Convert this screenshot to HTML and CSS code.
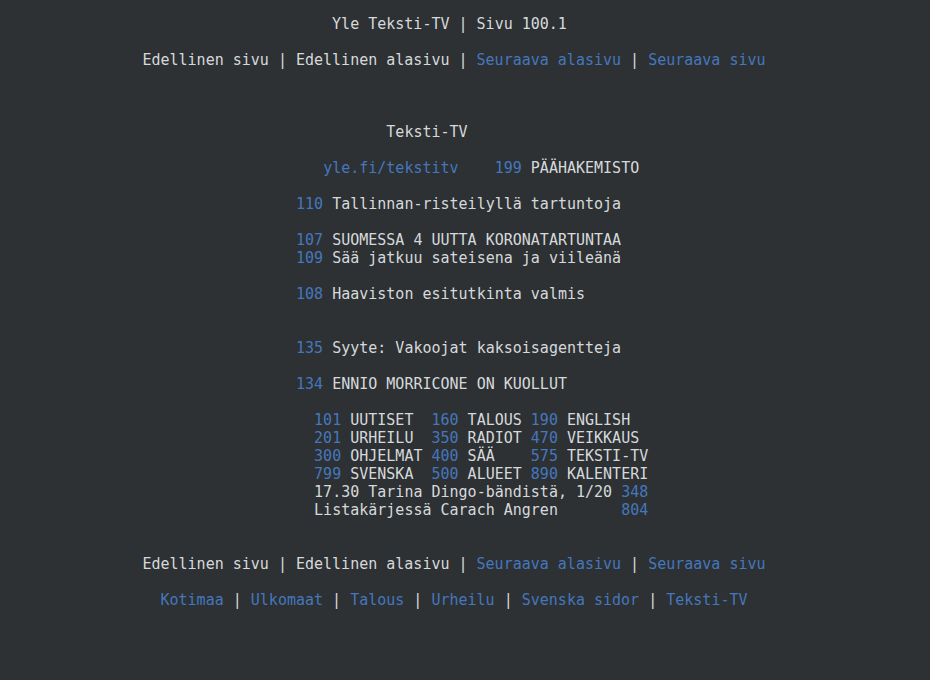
FILE: index.html
```html
<!DOCTYPE html>
<html lang="fi">
<head>
<meta charset="utf-8">
<title>Yle Teksti-TV | Sivu 100.1</title>
<link rel="stylesheet" href="styles.css">
</head>
<body>
<div class="page">
<h1 class="title">Yle Teksti-TV | Sivu 100.1 </h1>
<nav class="nav nav-top">Edellinen sivu | Edellinen alasivu | <a href="#">Seuraava alasivu</a> | <a href="#">Seuraava sivu</a></nav>
<pre class="tt">           Teksti-TV

    <a href="#">yle.fi/tekstitv</a>    <a href="#">199</a> PÄÄHAKEMISTO

 <a href="#">110</a> Tallinnan-risteilyllä tartuntoja

 <a href="#">107</a> SUOMESSA 4 UUTTA KORONATARTUNTAA
 <a href="#">109</a> Sää jatkuu sateisena ja viileänä

 <a href="#">108</a> Haaviston esitutkinta valmis


 <a href="#">135</a> Syyte: Vakoojat kaksoisagentteja

 <a href="#">134</a> ENNIO MORRICONE ON KUOLLUT

   <a href="#">101</a> UUTISET  <a href="#">160</a> TALOUS <a href="#">190</a> ENGLISH
   <a href="#">201</a> URHEILU  <a href="#">350</a> RADIOT <a href="#">470</a> VEIKKAUS
   <a href="#">300</a> OHJELMAT <a href="#">400</a> SÄÄ    <a href="#">575</a> TEKSTI-TV
   <a href="#">799</a> SVENSKA  <a href="#">500</a> ALUEET <a href="#">890</a> KALENTERI
   17.30 Tarina Dingo-bändistä, 1/20 <a href="#">348</a>
   Listakärjessä Carach Angren       <a href="#">804</a></pre>
<nav class="nav nav-bottom">Edellinen sivu | Edellinen alasivu | <a href="#">Seuraava alasivu</a> | <a href="#">Seuraava sivu</a></nav>
<nav class="nav nav-sections"><a href="#">Kotimaa</a> | <a href="#">Ulkomaat</a> | <a href="#">Talous</a> | <a href="#">Urheilu</a> | <a href="#">Svenska sidor</a> | <a href="#">Teksti-TV</a></nav>
</div>
</body>
</html>
```
FILE: styles.css
```css
html, body {
  margin: 0;
  padding: 0;
  background: #2d3133;
}
body {
  color: #d6d9dc;
  font-family: "DejaVu Sans Mono", "Liberation Mono", monospace;
  font-size: 15px;
  line-height: 18px;
}
a {
  color: #4577bd;
  text-decoration: none;
}
.page {
  width: 908px;
  display: flex;
  flex-direction: column;
  align-items: center;
  padding-top: 15px;
}
.title {
  margin: 0;
  font-size: 15px;
  font-weight: normal;
  line-height: 18px;
  white-space: pre;
}
.nav {
  white-space: pre;
}
.nav-top {
  margin-top: 18px;
}
.tt {
  margin: 54px 0 0 26px;
  width: 360px;
  font-family: inherit;
  font-size: 15px;
  line-height: 18px;
  white-space: pre;
}
.nav-bottom {
  margin-top: 36px;
}
.nav-sections {
  margin-top: 18px;
}
```
